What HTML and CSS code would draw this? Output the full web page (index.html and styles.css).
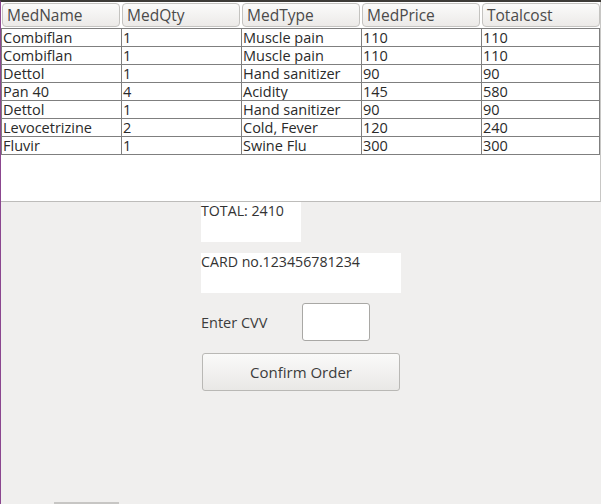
FILE: index.html
```html
<!DOCTYPE html>
<html>
<head>
<meta charset="utf-8">
<link rel="stylesheet" href="styles.css">
</head>
<body>
<div class="window">
  <div class="table-area">
    <div class="headers">
      <div class="hcell">MedName</div>
      <div class="hcell">MedQty</div>
      <div class="hcell">MedType</div>
      <div class="hcell">MedPrice</div>
      <div class="hcell">Totalcost</div>
    </div>
    <div class="grid">
      <div class="row"><div class="cell">Combiflan</div><div class="cell">1</div><div class="cell">Muscle pain</div><div class="cell">110</div><div class="cell">110</div></div>
      <div class="row"><div class="cell">Combiflan</div><div class="cell">1</div><div class="cell">Muscle pain</div><div class="cell">110</div><div class="cell">110</div></div>
      <div class="row"><div class="cell">Dettol</div><div class="cell">1</div><div class="cell">Hand sanitizer</div><div class="cell">90</div><div class="cell">90</div></div>
      <div class="row"><div class="cell">Pan 40</div><div class="cell">4</div><div class="cell">Acidity</div><div class="cell">145</div><div class="cell">580</div></div>
      <div class="row"><div class="cell">Dettol</div><div class="cell">1</div><div class="cell">Hand sanitizer</div><div class="cell">90</div><div class="cell">90</div></div>
      <div class="row"><div class="cell">Levocetrizine</div><div class="cell">2</div><div class="cell">Cold, Fever</div><div class="cell">120</div><div class="cell">240</div></div>
      <div class="row"><div class="cell">Fluvir</div><div class="cell">1</div><div class="cell">Swine Flu</div><div class="cell">300</div><div class="cell">300</div></div>
    </div>
  </div>
  <div class="form">
    <div class="label-box total">TOTAL: 2410</div>
    <div class="label-box card">CARD no.123456781234</div>
    <div class="cvv-row">
      <span class="cvv-label">Enter CVV</span>
      <div class="cvv-input"></div>
    </div>
    <button class="confirm">Confirm Order</button>
  </div>
  <div class="bottom-bar"></div>
</div>
</body>
</html>
```
FILE: styles.css
```css
* { box-sizing: border-box; }
html, body {
  margin: 0;
  padding: 0;
  background: #f0efee;
}
body {
  font-family: "Open Sans", "DejaVu Sans", sans-serif;
  color: #333;
  width: 601px;
  height: 504px;
  overflow: hidden;
}
.window {
  position: relative;
  width: 601px;
  height: 504px;
  border-left: 1px solid #8b468f;
  border-top: 2px solid #3d3b37;
}
.table-area {
  background: #fff;
  height: 200px;
  border-bottom: 1px solid #bdbcba;
  border-right: 1px solid #c8c7c5;
}
.headers {
  display: grid;
  grid-template-columns: repeat(5, 120px);
  padding: 1px 0 0 0;
  height: 26px;
}
.hcell {
  margin: 0 1px 0 1px;
  height: 24px;
  border: 1px solid #c4c3c0;
  border-radius: 4px;
  background: linear-gradient(#fbfbfa, #eceae8);
  font-size: 15.5px;
  line-height: 22px;
  padding-left: 4px;
  color: #4a4a4a;
}
.grid {
  width: 599px;
  border-top: 1px solid #7f7f7f;
  border-left: 1px solid #7f7f7f;
}
.row {
  display: grid;
  grid-template-columns: 120px 120px 120px 120px 118px;
  height: 18px;
  border-bottom: 1px solid #7f7f7f;
}
.cell {
  border-right: 1px solid #7f7f7f;
  font-size: 14.5px;
  line-height: 17px;
  padding-left: 1px;
  white-space: nowrap;
  overflow: hidden;
  color: #2a2a2a;
}
.form {
  padding: 0 0 0 200px;
  display: flex;
  flex-direction: column;
  align-items: flex-start;
}
.label-box {
  background: #fff;
  font-size: 14.2px;
  line-height: 17px;
  padding-top: 0;
  color: #333;
  white-space: nowrap;
}
.total {
  width: 100px;
  height: 40px;
}
.card {
  width: 200px;
  height: 40px;
  margin-top: 11px;
}
.cvv-row {
  display: flex;
  align-items: center;
  margin-top: 10px;
  height: 38px;
}
.cvv-label {
  font-size: 14.5px;
  color: #3c3c3c;
  width: 101px;
}
.cvv-input {
  width: 68px;
  height: 38px;
  background: #fff;
  border: 1px solid #a9a8a5;
  border-radius: 3px;
}
.confirm {
  margin: 12px 0 0 1px;
  width: 198px;
  height: 38px;
  border: 1px solid #b9b8b5;
  border-radius: 3px;
  background: linear-gradient(#fafaf9, #e9e8e6);
  font-family: "Open Sans", "DejaVu Sans", sans-serif;
  font-size: 15px;
  color: #3c3c3c;
  padding: 0;
}
.bottom-bar {
  position: absolute;
  left: 53px;
  bottom: 0;
  width: 65px;
  height: 2px;
  background: #c7c6c4;
}
```
